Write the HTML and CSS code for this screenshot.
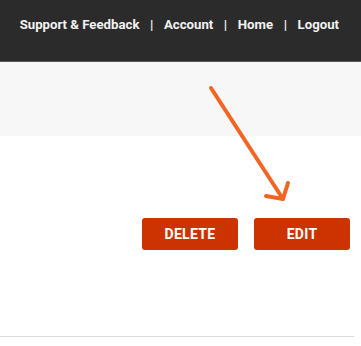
FILE: index.html
```html
<!DOCTYPE html>
<html>
<head>
<meta charset="utf-8">
<link rel="stylesheet" href="styles.css">
</head>
<body>
<header class="topbar">
  <nav class="nav">
    <a class="nav-link">Support &amp; Feedback</a>
    <span class="sep">|</span>
    <a class="nav-link">Account</a>
    <span class="sep">|</span>
    <a class="nav-link">Home</a>
    <span class="sep">|</span>
    <a class="nav-link">Logout</a>
  </nav>
</header>
<div class="band"></div>
<main class="content">
  <div class="actions">
    <button class="btn">DELETE</button>
    <button class="btn">EDIT</button>
  </div>
  <hr class="rule">
</main>
<svg class="arrow" width="361" height="346" viewBox="0 0 361 346">
  <path d="M211 88 L283 199" />
  <path d="M288 183 L283 199 L266 196" />
</svg>
</body>
</html>
```
FILE: styles.css
```css
html, body {
  margin: 0;
  padding: 0;
  background: #ffffff;
  font-family: Roboto, "Liberation Sans", sans-serif;
}
body {
  position: relative;
  width: 361px;
  height: 346px;
  overflow: hidden;
}
.topbar {
  height: 61px;
  background: #2b2b2b;
  border-bottom: 1px solid #5a5a5a;
  display: flex;
  align-items: flex-start;
  justify-content: flex-end;
  padding-right: 22px;
  box-sizing: content-box;
}
.nav {
  display: flex;
  align-items: center;
  gap: 10.6px;
  color: #f2f2f2;
  font-size: 13.2px;
  font-weight: 700;
  line-height: 16px;
  margin-top: 17px;
}
.nav-link {
  color: #f2f2f2;
}
.band {
  height: 74px;
  background: #f7f7f7;
}
.content {
  padding-top: 82px;
}
.actions {
  display: flex;
  justify-content: flex-end;
  gap: 16px;
  padding-right: 11px;
}
.btn {
  width: 96px;
  height: 32px;
  border: none;
  border-radius: 3px;
  background: #cc3300;
  color: #ffffff;
  font-family: Roboto, "Liberation Sans", sans-serif;
  font-weight: 700;
  font-size: 14px;
  letter-spacing: 0.3px;
  padding: 0;
}
.rule {
  margin: 86px 0 0 0;
  width: 354px;
  border: none;
  border-top: 1px solid #dddddd;
}
.arrow {
  position: absolute;
  left: 0;
  top: 0;
  pointer-events: none;
}
.arrow path {
  fill: none;
  stroke: #f26522;
  stroke-width: 4;
  stroke-linecap: round;
  stroke-linejoin: round;
}
```
